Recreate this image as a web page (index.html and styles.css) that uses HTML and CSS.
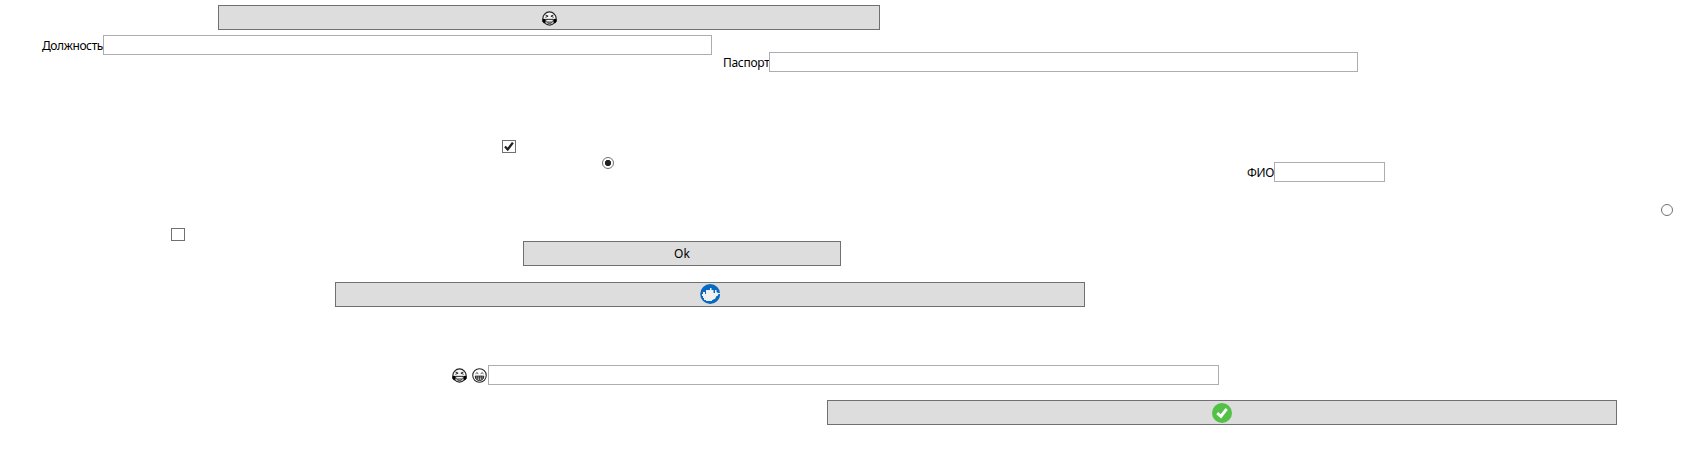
FILE: index.html
```html
<!DOCTYPE html>
<html lang="ru">
<head>
<meta charset="utf-8">
<title>Form</title>
<link rel="stylesheet" href="styles.css">
</head>
<body>
<svg class="defs" width="0" height="0">
  <symbol id="joy" viewBox="0 0 14 14">
    <circle cx="7" cy="7" r="6.2" fill="#f4f4f4" stroke="#222" stroke-width="1"/>
    <path d="M3.2 3.7 5.7 4.8 3.2 5.9M10.8 3.7 8.3 4.8 10.8 5.9" fill="none" stroke="#222" stroke-width=".9"/>
    <path d="M.4 7.2 3.5 7.5 3.4 10.8 1.8 11.4.2 9.8ZM13.6 7.2 10.5 7.5 10.6 10.8 12.2 11.4 13.8 9.8Z" fill="#000"/>
    <path d="M3.5 7.8H10.5Q10.2 11.6 7 11.6T3.5 7.8Z" fill="#888" stroke="#222" stroke-width=".8"/>
    <path d="M4 9H10" stroke="#fff"/>
  </symbol>
  <symbol id="grin" viewBox="0 0 14 14">
    <circle cx="7" cy="7" r="6.3" fill="#fff" stroke="#222" stroke-width="1"/>
    <path d="M3.3 5.4Q4.6 3.3 5.9 5.4M8.1 5.4Q9.4 3.3 10.7 5.4" fill="none" stroke="#222" stroke-width=".8"/>
    <path d="M3 7.6H11Q10.8 11.6 7 11.6T3 7.6Z" fill="#ddd" stroke="#111" stroke-width=".9"/>
    <path d="M3.2 9.2H10.8M5 7.6V11M7 7.6V11.4M9 7.6V11" stroke="#222" stroke-width=".7"/>
  </symbol>
</svg>
<main class="form">
  <div class="row row-laugh"><button class="btn"><svg class="face"><use href="#joy"/></svg></button></div>
  <div class="row row-staff">
    <label class="field job"><span class="caption">Должность</span><input class="text" type="text"></label>
    <label class="field passport"><span class="caption">Паспорт</span><input class="text" type="text"></label>
  </div>
  <div class="row row-checked"><span class="check"><svg width="12" height="11" viewBox="0 0 12 11"><path d="M2 5.4 4.7 8.4 9.9 1.6" fill="none" stroke="#212121" stroke-width="2.3"/></svg></span></div>
  <div class="row row-name">
    <span class="radio on"></span>
    <label class="field fio"><span class="caption">ФИО</span><input class="text" type="text"></label>
  </div>
  <div class="row row-radio"><span class="radio"></span></div>
  <div class="row row-unchecked"><span class="check"></span></div>
  <div class="row row-ok"><button class="btn">Ok</button></div>
  <div class="row row-docker"><button class="btn"><svg class="badge" width="21" height="20" viewBox="0 0 21 20"><circle cx="10.2" cy="10" r="10" fill="#0869c0"/><path d="M2 10H3V8H5V10H6V6H10V4H11.5V6H13.5V9H15V6H16.5V8L18 9H20.6V10H18.5L17.5 12H16.5L15 15H13.5V16H12V17H6V16H4V14H3V12H2Z" fill="#f1f1f1"/></svg></button></div>
  <div class="row row-emoji">
    <label class="field emoji"><span class="caption"><svg class="face"><use href="#joy"/></svg><svg class="face"><use href="#grin"/></svg></span><input class="text" type="text"></label>
  </div>
  <div class="row row-accept"><button class="btn"><svg width="20" height="20" viewBox="0 0 20 20"><circle cx="10" cy="10" r="10" fill="#52c145"/><path d="M5.2 10.2 8.9 13.4 14.7 5.8" fill="none" stroke="#fff" stroke-width="2.9"/></svg></button></div>
</main>
</body>
</html>
```
FILE: styles.css
```css
* { box-sizing: border-box; }
body { margin: 0; background: #fff; color: #000; font: 12px/16px "Noto Sans", "Open Sans", sans-serif; }
.defs { display: block; }
.form { display: flex; flex-direction: column; width: 1688px; height: 476px; padding-top: 5px; overflow: hidden; }
.row { display: flex; align-items: flex-start; flex: none; }
.btn { display: flex; align-items: center; justify-content: center; width: 100%; height: 25px; padding: 0; border: 1px solid #707070; border-radius: 0; background: #ddd; color: #000; font: inherit; }
.btn svg { display: block; flex: none; }
.badge { margin-bottom: 1px; }
.face { display: block; width: 15px; height: 15px; flex: none; }
.field { display: flex; align-items: flex-start; flex: none; }
.caption { flex: none; padding-top: 3px; white-space: nowrap; }
.text { flex: 1; min-width: 0; height: 20px; margin: 0; padding: 0 2px; border: 1px solid #abadb3; border-radius: 0; background: #fff; font: inherit; outline: 0; }
.check { display: block; width: 14px; height: 13px; border: 1px solid #707070; background: #fff; }
.check svg { display: block; }
.radio { display: block; flex: none; width: 12px; height: 12px; border: 1px solid #707070; border-radius: 50%; background: #fff; }
.radio.on { background: radial-gradient(circle, #212121 2.8px, #fff 3.5px); }

.row-laugh { padding-left: 218px; padding-right: 808px; }
.row-laugh .face { margin-top: 2px; }
.row-staff { margin-top: 5px; padding-left: 42px; }
.job { width: 670px; }
.job .caption { width: 61px; letter-spacing: -0.4px; }
.passport { width: 635px; margin: 17px 0 0 11px; }
.passport .caption { width: 46px; letter-spacing: -0.3px; }
.row-checked { margin-top: 68px; padding-left: 502px; }
.row-name { margin-top: 4px; padding-left: 602px; }
.fio { width: 138px; margin: 5px 0 0 633px; }
.fio .caption { width: 27px; letter-spacing: -0.3px; }
.row-radio { margin-top: 22px; padding-left: 1661px; }
.row-unchecked { margin-top: 12px; padding-left: 171px; }
.row-ok { padding-left: 523px; padding-right: 847px; }
.row-docker { margin-top: 16px; padding-left: 335px; padding-right: 603px; }
.row-emoji { margin-top: 58px; padding-left: 452px; }
.emoji { width: 767px; }
.emoji .caption { display: flex; gap: 5px; width: 36px; padding-top: 3px; }
.row-accept { margin-top: 15px; padding-left: 827px; padding-right: 71px; }
```
